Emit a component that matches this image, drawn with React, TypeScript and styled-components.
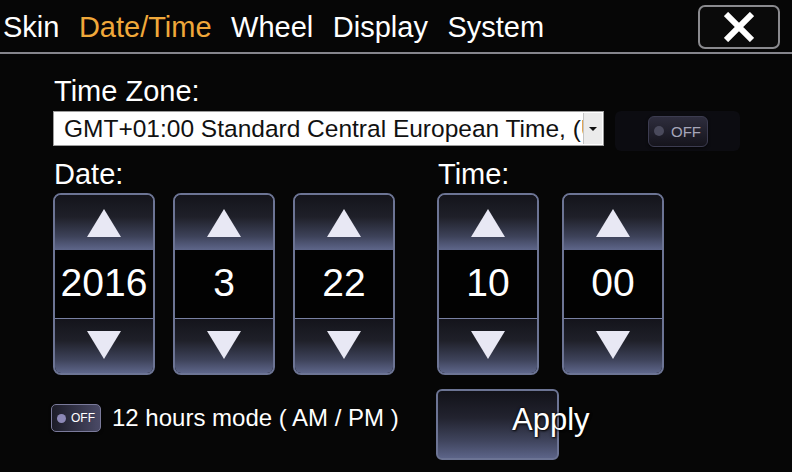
import styled, { createGlobalStyle } from 'styled-components'

const GlobalStyle = createGlobalStyle`
  html, body {
    margin: 0;
    padding: 0;
    background: #060606;
    font-family: "Liberation Sans", Arial, sans-serif;
    color: #fff;
  }
  * {
    box-sizing: border-box;
  }
`

const StyledPage = styled.div`
  width: 792px;
  height: 472px;
  overflow: hidden;
  display: flex;
  flex-direction: column;
  background: #060606;
`

const StyledHeader = styled.div`
  height: 52px;
  display: flex;
  align-items: flex-start;
  justify-content: space-between;
  padding: 0 12px 0 3px;
`

const StyledTabs = styled.div`
  display: flex;
  gap: 19.5px;
  padding-top: 10px;
`

const StyledTab = styled.span<{ $active?: boolean }>`
  font-size: 29px;
  line-height: 34px;
  color: ${(p) => (p.$active ? '#f0a83a' : '#ffffff')};
`

const StyledClose = styled.button`
  margin-top: 5px;
  width: 82px;
  height: 44px;
  border: 2px solid #8a8a8e;
  border-radius: 7px;
  background: #0a0a0a;
  display: flex;
  align-items: center;
  justify-content: center;
  padding: 0;
`

const StyledDivider = styled.div`
  height: 2px;
  background: #85858c;
`

const StyledContent = styled.div`
  padding-left: 53px;
  display: flex;
  flex-direction: column;
`

const StyledLabel = styled.div<{ $top: number }>`
  font-size: 29px;
  line-height: 32px;
  margin-top: ${(p) => p.$top}px;
  padding-left: 1px;
`

const StyledZoneRow = styled.div`
  display: flex;
  align-items: flex-start;
  gap: 11px;
  margin-top: 4px;
`

const StyledSelect = styled.div`
  width: 551px;
  height: 35px;
  background: #ffffff;
  border: 1px solid #9c9c9c;
  display: flex;
  align-items: stretch;
  padding: 1px;
`

const StyledSelectText = styled.div`
  flex: 1;
  overflow: hidden;
  white-space: nowrap;
  color: #111;
  font-size: 24.5px;
  line-height: 31px;
  padding-left: 9px;
`

const StyledSelectArrow = styled.div`
  width: 19px;
  background: #ebebeb;
  border-left: 1px solid #c4c4c4;
  display: flex;
  align-items: center;
  justify-content: center;
  &::after {
    content: '';
    border-left: 4px solid transparent;
    border-right: 4px solid transparent;
    border-top: 4px solid #111;
  }
`

const StyledWell = styled.div`
  width: 125px;
  height: 40px;
  background: #0c0c11;
  border-radius: 6px;
  display: flex;
  align-items: center;
  justify-content: center;
`

const StyledToggle = styled.div<{ $small?: boolean }>`
  width: ${(p) => (p.$small ? 50 : 60)}px;
  height: ${(p) => (p.$small ? 28 : 31)}px;
  border-radius: ${(p) => (p.$small ? 5 : 6)}px;
  border: 1px solid ${(p) => (p.$small ? '#7a7a9a' : '#3c3c50')};
  background: ${(p) =>
    p.$small
      ? 'linear-gradient(to right, #1c1c28, #4a4a66)'
      : 'linear-gradient(to bottom, #2e2d3d, #15141c)'};
  display: flex;
  align-items: center;
  justify-content: center;
  gap: ${(p) => (p.$small ? 5 : 7)}px;
  font-size: ${(p) => (p.$small ? 12 : 15)}px;
  color: ${(p) => (p.$small ? '#ffffff' : '#a6a6ba')};
  box-shadow: 0 1px 3px rgba(0, 0, 0, 0.6);
`

const StyledDot = styled.span<{ $small?: boolean }>`
  width: ${(p) => (p.$small ? 9 : 10)}px;
  height: ${(p) => (p.$small ? 9 : 10)}px;
  border-radius: 50%;
  background: ${(p) => (p.$small ? '#8c88b6' : '#4a4a5c')};
`

const StyledPickers = styled.div`
  display: flex;
  align-items: flex-start;
  gap: 42px;
`

const StyledGroup = styled.div`
  display: flex;
  flex-direction: column;
`

const StyledSpinners = styled.div<{ $gap: number }>`
  display: flex;
  gap: ${(p) => p.$gap}px;
  margin-top: 3px;
`

const StyledSpinner = styled.div`
  width: 102px;
  height: 182px;
  border: 2px solid #6c7494;
  border-radius: 8px;
  overflow: hidden;
  background: #020202;
  display: flex;
  flex-direction: column;
`

const StyledArrowButton = styled.div<{ $down?: boolean }>`
  height: 55px;
  display: flex;
  align-items: center;
  justify-content: center;
  background: linear-gradient(to bottom, #14141b 0%, #1f2029 40%, #3d4259 75%, #5e668a 100%);
  border-top: ${(p) => (p.$down ? '1px solid #7880a2' : 'none')};
`

const StyledTriangle = styled.span<{ $down?: boolean }>`
  width: 0;
  height: 0;
  border-left: 17px solid transparent;
  border-right: 17px solid transparent;
  ${(p) =>
    p.$down ? 'border-top: 28px solid #e8e8f4;' : 'border-bottom: 28px solid #e8e8f4;'}
  margin-top: ${(p) => (p.$down ? -2 : 0)}px;
`

const StyledValue = styled.div`
  height: 68px;
  display: flex;
  align-items: center;
  justify-content: center;
  font-size: 39px;
  color: #ffffff;
  padding-bottom: 3px;
`

const StyledBottomRow = styled.div`
  display: flex;
  align-items: flex-start;
  margin-top: 14px;
`

const StyledModeOption = styled.div`
  width: 385px;
  display: flex;
  align-items: center;
  gap: 11px;
  margin-top: 15px;
  margin-left: -2px;
  font-size: 24px;
`

const StyledApply = styled.button`
  width: 123px;
  height: 71px;
  border: 2px solid #6c7494;
  border-radius: 6px;
  background: linear-gradient(to bottom, #121219 0%, #22232f 40%, #40455e 75%, #5c6488 100%);
  display: flex;
  align-items: flex-start;
  padding: 11px 0 0 74px;
  overflow: visible;
  white-space: nowrap;
  font-family: "Liberation Sans", Arial, sans-serif;
  font-size: 31px;
  color: #ffffff;
  text-shadow: 0 0 3px rgba(0, 0, 0, 0.9), 1px 1px 2px rgba(0, 0, 0, 0.8);
`

const tabs = ['Skin', 'Date/Time', 'Wheel', 'Display', 'System']

const Spinner = ({ value }: { value: string }) => (
  <StyledSpinner>
    <StyledArrowButton>
      <StyledTriangle />
    </StyledArrowButton>
    <StyledValue>{value}</StyledValue>
    <StyledArrowButton $down>
      <StyledTriangle $down />
    </StyledArrowButton>
  </StyledSpinner>
)

const Toggle = ({ small }: { small?: boolean }) => (
  <StyledToggle $small={small}>
    <StyledDot $small={small} />
    <span>OFF</span>
  </StyledToggle>
)

const App = () => {
  return (
    <StyledPage>
      <GlobalStyle />
      <StyledHeader>
        <StyledTabs>
          {tabs.map((t) => (
            <StyledTab key={t} $active={t === 'Date/Time'}>
              {t}
            </StyledTab>
          ))}
        </StyledTabs>
        <StyledClose>
          <svg width="30" height="30" viewBox="0 0 30 30">
            <path d="M2 2 L28 28 M28 2 L2 28" stroke="#ffffff" strokeWidth="6" />
          </svg>
        </StyledClose>
      </StyledHeader>
      <StyledDivider />
      <StyledContent>
        <StyledLabel $top={21}>Time Zone:</StyledLabel>
        <StyledZoneRow>
          <StyledSelect>
            <StyledSelectText>GMT+01:00 Standard Central European Time, (UTC+01:00)</StyledSelectText>
            <StyledSelectArrow />
          </StyledSelect>
          <StyledWell>
            <Toggle />
          </StyledWell>
        </StyledZoneRow>
        <StyledPickers>
          <StyledGroup>
            <StyledLabel $top={7}>Date:</StyledLabel>
            <StyledSpinners $gap={18}>
              <Spinner value="2016" />
              <Spinner value="3" />
              <Spinner value="22" />
            </StyledSpinners>
          </StyledGroup>
          <StyledGroup>
            <StyledLabel $top={7}>Time:</StyledLabel>
            <StyledSpinners $gap={23}>
              <Spinner value="10" />
              <Spinner value="00" />
            </StyledSpinners>
          </StyledGroup>
        </StyledPickers>
        <StyledBottomRow>
          <StyledModeOption>
            <Toggle small />
            <span>12 hours mode ( AM / PM )</span>
          </StyledModeOption>
          <StyledApply>Apply</StyledApply>
        </StyledBottomRow>
      </StyledContent>
    </StyledPage>
  )
}

export default App
